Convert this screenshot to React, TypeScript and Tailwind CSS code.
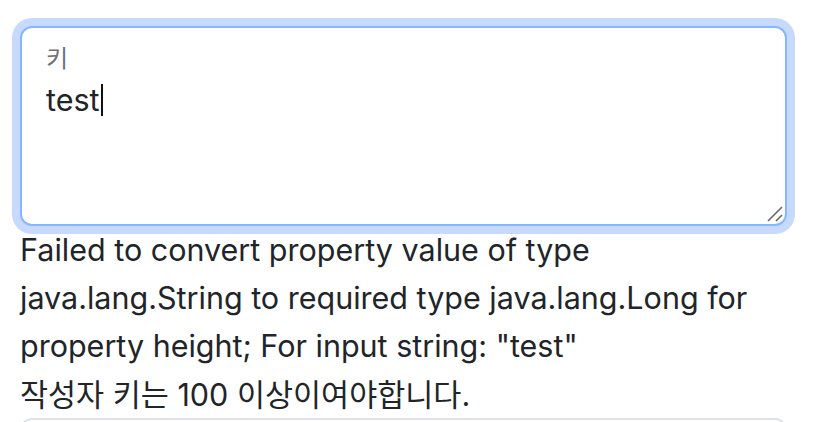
import React from "react";

export default function App() {
  return (
    <div
      className="w-[818px] h-[422px] overflow-hidden bg-white text-[#212529]"
      style={{ fontFamily: 'Inter, "Noto Sans CJK KR", sans-serif' }}
    >
      <div className="pl-[20px] pt-[26px] w-[787px]">
        <div className="relative w-[767px] h-[200px] rounded-[12px] border-2 border-[#86b7fe] bg-white ring-8 ring-[#c7dafd]">
          <label
            className="absolute left-[24px] top-[15px] text-[24px] leading-[28px] text-[#6f7276]"
            style={{ fontFamily: '"Noto Sans CJK KR", sans-serif' }}
          >
            키
          </label>
          <div className="pl-[24px] pt-[48px] text-[30.5px] leading-[48px] flex items-center">
            <span>test</span>
            <span className="inline-block w-[2px] h-[32px] bg-[#111] ml-[1px]" />
          </div>
          <svg
            className="absolute right-[1px] bottom-[1px]"
            width="18"
            height="18"
            viewBox="0 0 18 18"
          >
            <line x1="2" y1="16" x2="16" y2="2" stroke="#666" strokeWidth="1.6" />
            <line x1="10" y1="16" x2="16" y2="10" stroke="#666" strokeWidth="1.6" />
          </svg>
        </div>
        <div className="w-[767px] text-[30.5px] leading-[48px]">
          Failed to convert property value of type java.lang.String to required type java.lang.Long for property height; For input string: "test"
        </div>
        <div className="w-[767px] pt-[2px] text-[30.5px] leading-[46px]">
          작성자 키는 100 이상이여야합니다.
        </div>
        <div className="w-[767px] h-[80px] rounded-[12px] border-2 border-[#dee2e6]" />
      </div>
    </div>
  );
}
